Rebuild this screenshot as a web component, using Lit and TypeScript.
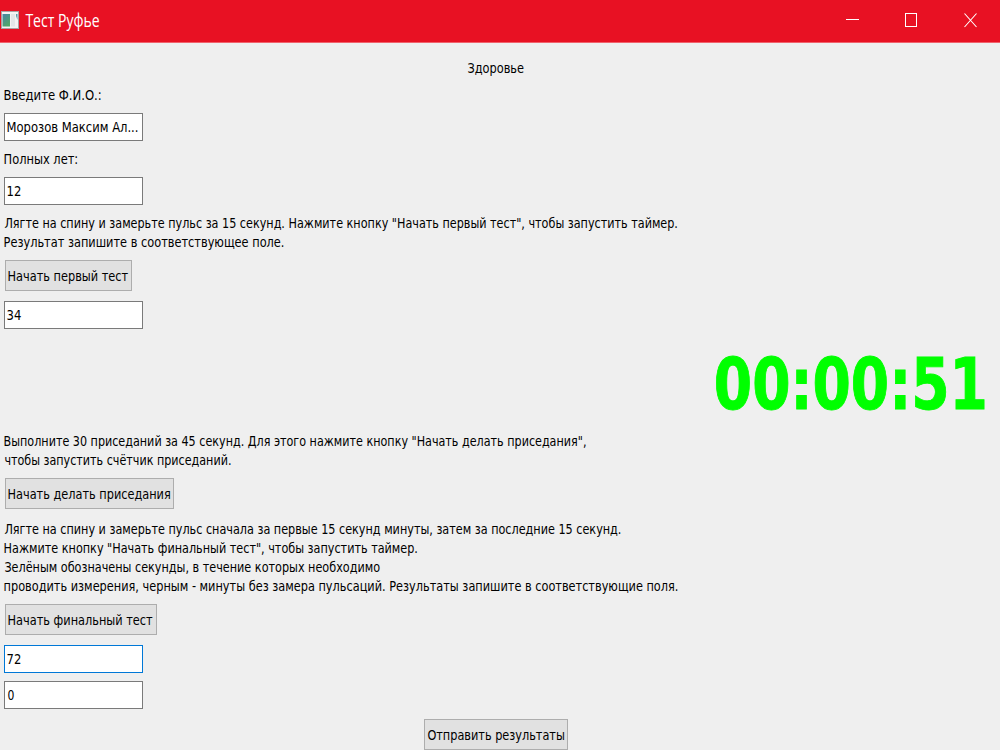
import { LitElement, html, css } from "lit";
import { customElement, property } from "lit/decorators.js";

/** One line of text whose visible glyphs span exactly `span` pixels. */
@customElement("fit-line")
class FitLine extends LitElement {
  @property() text = "";
  @property({ type: Number }) span = 0;
  static styles = css`
    :host { display: block; height: 19px; line-height: 19px; white-space: pre; }
    .t { display: inline-block; transform-origin: 0 50%; }
  `;
  updated() {
    const el = this.renderRoot.querySelector(".t") as HTMLElement;
    const cs = getComputedStyle(el);
    const ctx = document.createElement("canvas").getContext("2d")!;
    ctx.font = `${cs.fontWeight} ${cs.fontSize} ${cs.fontFamily}`;
    const m = ctx.measureText(this.text);
    const k = this.span / (m.actualBoundingBoxRight + m.actualBoundingBoxLeft);
    el.style.transform = `translate(${m.actualBoundingBoxLeft * k + 0.4}px, -1px) scaleX(${k})`;
    this.style.width = `${this.span}px`;
  }
  render() {
    return html`<span class="t">${this.text}</span>`;
  }
}

const line = (text: string, span: number) =>
  html`<fit-line .text=${text} .span=${span}></fit-line>`;

@customElement("app-root")
export class AppRoot extends LitElement {
  static styles = css`
    :host {
      display: flex; flex-direction: column; width: 1000px; height: 750px;
      overflow: hidden; box-sizing: border-box; background: #efefef; color: #000;
      font-family: "DejaVu Sans Condensed", "DejaVu Sans", sans-serif; font-size: 14.8px;
    }
    .bar {
      display: flex; align-items: center; flex: none; height: 42px;
      background: #e81123; border-bottom: 1px solid #f0626d; color: #fff;
      font-family: "Open Sans", "Noto Sans", sans-serif; font-size: 17.5px;
    }
    .logo { margin: 0 6px 3px 1px; }
    .controls { margin-left: auto; display: flex; }
    .body { display: flex; flex-direction: column; align-items: flex-start; padding: 16px 0 0 4px; }
    .heading { align-self: center; margin-right: 14px; margin-bottom: 8px; }
    .label { margin-bottom: 8px; }
    .field {
      box-sizing: border-box; width: 139px; height: 28px; margin-bottom: 9px;
      border: 1px solid #7a7a7a; background: #fff; padding: 4px 0 0 2px;
    }
    .focus { border-color: #0078d7; }
    .btn {
      box-sizing: border-box; height: 31px; margin: 0 0 9px 1px; padding: 2px 3px 0 2px;
      border: 1px solid #adadad; background: #e1e1e1; color: #000; font: inherit;
      display: block;
    }
    .send { align-self: center; margin-right: 14px; }
    .timer {
      align-self: flex-end; height: 94px; display: flex; align-items: center;
      margin: 0 16px 0 0; color: #0f0; font-weight: 700; font-size: 71px;
      -webkit-text-stroke: 0.9px #0f0;
    }
    .gap { margin-bottom: 10px; }
    .wide { margin-bottom: 11px; }
    .near { margin-bottom: 8px; }
  `;

  render() {
    return html`
      <div class="bar">
        <svg class="logo" width="18" height="18" viewBox="0 0 18 18">
          <defs><linearGradient id="g" x2="0.6" y2="1"><stop stop-color="#4b83a8"/><stop offset="1" stop-color="#4fa768"/></linearGradient></defs>
          <rect x=".5" y=".5" width="17" height="17" fill="#f4f4f4" stroke="#a5a5a5"/>
          <rect x="1.5" y="3" width="7.5" height="12.5" fill="url(#g)"/>
          <rect x="10" y="3" width="4" height="12.5" fill="#e4e7e8"/>
          <path d="M15 3h1.5v6L15 5z" fill="#5d9bab"/>
        </svg>
        ${line("Тест Руфье", 73.5)}
        <svg class="controls" width="180" height="42" viewBox="0 0 180 42" fill="none" stroke="#fff">
          <path d="M26 19.5h13"/>
          <rect x="85.5" y="13.5" width="11" height="13"/>
          <path d="M144.5 13.5l12 13.5M156.5 13.5l-12 13.5" stroke-width="1.1"/>
        </svg>
      </div>
      <div class="body">
        <div class="heading">${line("Здоровье", 56.5)}</div>
        <div class="label">${line("Введите Ф.И.О.:", 96)}</div>
        <div class="field">${line("Морозов Максим Ал...", 130)}</div>
        <div class="label">${line("Полных лет:", 72.5)}</div>
        <div class="field">${line("12", 13.5)}</div>
        <div class="label">
          ${line('Лягте на спину и замерьте пульс за 15 секунд. Нажмите кнопку "Начать первый тест", чтобы запустить таймер.', 672.5)}
          ${line("Результат запишите в соответствующее поле.", 279)}
        </div>
        <button class="btn gap">${line("Начать первый тест", 120)}</button>
        <div class="field">${line("34", 13.5)}</div>
        <div class="timer">${line("00:00:51", 268.5)}</div>
        <div class="label">
          ${line('Выполните 30 приседаний за 45 секунд. Для этого нажмите кнопку "Начать делать приседания",', 581)}
          ${line("чтобы запустить счётчик приседаний.", 226)}
        </div>
        <button class="btn wide">${line("Начать делать приседания", 161.5)}</button>
        <div class="label">
          ${line("Лягте на спину и замерьте пульс сначала за первые 15 секунд минуты, затем за последние 15 секунд.", 616)}
          ${line('Нажмите кнопку "Начать финальный тест", чтобы запустить таймер.', 412.5)}
          ${line("Зелёным обозначены секунды, в течение которых необходимо", 375.5)}
          ${line("проводить измерения, черным - минуты без замера пульсаций. Результаты запишите в соответствующие поля.", 673)}
        </div>
        <button class="btn gap">${line("Начать финальный тест", 144.5)}</button>
        <div class="field focus near">${line("72", 13.5)}</div>
        <div class="field gap">${line("0", 6.5)}</div>
        <button class="btn send">${line("Отправить результаты", 137)}</button>
      </div>
    `;
  }
}
